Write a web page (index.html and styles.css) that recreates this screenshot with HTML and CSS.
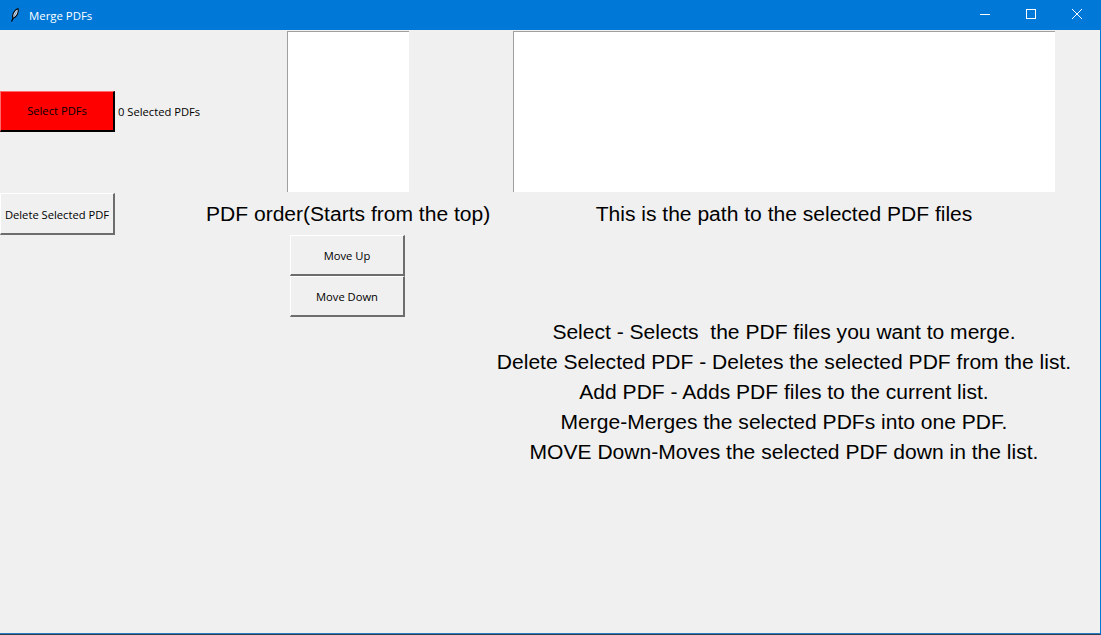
FILE: index.html
```html
<!DOCTYPE html>
<html lang="en">
<head>
<meta charset="UTF-8">
<meta name="viewport" content="width=device-width, initial-scale=1.0">
<title>Merge PDFs</title>
<link rel="stylesheet" href="styles.css">
</head>
<body>

<div class="window">
  <div class="titlebar">
    <svg class="feather" width="16" height="16" viewBox="0 0 16 16">
      <path d="M3.500 14.500 L5 11.500" stroke="#000" stroke-width="1.200" fill="none"/>
      <path d="M5 11.500 C3.800 8 5.500 3.500 10 1.500 C11 5 9.500 9.500 5 11.500 Z" fill="#cfe3f7" stroke="#000" stroke-width="1.100"/>
      <path d="M5.500 10 L8.500 4.500" stroke="#5a7fa5" stroke-width="0.800" fill="none"/>
    </svg>
    <span class="title">Merge PDFs</span>
    <div class="controls">
      <svg width="46" height="30" viewBox="0 0 46 30"><path d="M18 14.500 H28" stroke="#fff" fill="none"/></svg>
      <svg width="46" height="30" viewBox="0 0 46 30"><rect x="18.500" y="9.500" width="9" height="9" stroke="#fff" fill="none"/></svg>
      <svg width="46" height="30" viewBox="0 0 46 30"><path d="M18 9 L28 19 M28 9 L18 19" stroke="#fff" fill="none"/></svg>
    </div>
  </div>

  <div class="app">
    <div class="cell-select"><button class="btn btn-red">Select PDFs</button></div>
    <div class="cell-count">0 Selected PDFs</div>
    <div class="cell-order"><div class="listbox order-list"></div></div>
    <div class="cell-path"><div class="listbox path-list"></div></div>

    <button class="btn cell-delete">Delete Selected PDF</button>
    <div class="big cell-order-label">PDF order(Starts from the top)</div>
    <div class="big cell-path-label">This is the path to the selected PDF files</div>

    <button class="btn cell-up">Move Up</button>
    <button class="btn cell-down">Move Down</button>

    <div class="big help">
      <div>Select - Selects&nbsp; the PDF files you want to merge.</div>
      <div>Delete Selected PDF - Deletes the selected PDF from the list.</div>
      <div>Add PDF - Adds PDF files to the current list.</div>
      <div>Merge-Merges the selected PDFs into one PDF.</div>
      <div>MOVE Down-Moves the selected PDF down in the list.</div>
    </div>
  </div>
</div>

</body>
</html>
```

FILE: styles.css
```css
html, body {
  margin: 0;
  padding: 0;
  height: 100%;
  overflow: hidden;
}

.window {
  height: 635px;
  box-sizing: border-box;
  background-color: #f0f0f0;
  border-right: 1px solid #0078d7;
  border-bottom: 1px solid #2d3e50;
  display: flex;
  flex-direction: column;
}

.titlebar {
  height: 30px;
  flex: none;
  background-color: #0078d7;
  display: flex;
  align-items: center;
  padding-left: 8px;
}

.feather {
  flex: none;
}

.title {
  margin-left: 5px;
  color: #fff;
  font-family: "Open Sans", sans-serif;
  font-size: 11.4px;
}

.controls {
  margin-left: auto;
  display: flex;
}

.app {
  flex: 1;
  display: grid;
  grid-template-columns: 115px 91px 284px 588px;
  grid-template-rows: 163px 42px 41px 41px 1fr;
  border-bottom: 1px solid #2f7cc0;
  font-family: "Open Sans", sans-serif;
  font-size: 11.2px;
  color: #000;
}

.btn {
  display: block;
  width: 115px;
  padding: 1px 0 0;
  box-sizing: border-box;
  font-family: "Open Sans", sans-serif;
  font-size: 11.2px;
  color: #000;
  background-color: #f0f0f0;
  border: 2px solid;
  border-color: #fff #6d6d6d #6d6d6d #fff;
  border-left-width: 1px;
  border-top-width: 1px;
}

.btn-red {
  height: 41px;
  padding: 0 0 1px;
  background-color: #ff0000;
  border-color: #ff6a6a #000 #000 #ff6a6a;
}

.cell-select {
  grid-column: 1;
  grid-row: 1;
  align-self: center;
  margin-top: -1px;
}

.cell-count {
  grid-column: 2;
  grid-row: 1;
  align-self: center;
  white-space: nowrap;
  padding-left: 3px;
}

.cell-order,
.cell-path {
  grid-row: 1;
  padding-top: 1px;
  display: flex;
  justify-content: center;
  align-items: flex-start;
}

.cell-order {
  grid-column: 3;
}

.cell-path {
  grid-column: 4;
}

.listbox {
  box-sizing: border-box;
  background-color: #fff;
  border-top: 1px solid #a0a0a0;
  border-left: 1px solid #a0a0a0;
  height: 161px;
}

.order-list {
  width: 122px;
}

.path-list {
  width: 542px;
}

.cell-delete {
  grid-column: 1;
  grid-row: 2;
}

.big {
  font-family: "Liberation Sans", Arial, sans-serif;
  font-size: 21.05px;
  text-align: center;
  white-space: nowrap;
}

.cell-order-label {
  grid-column: 3;
  grid-row: 2;
  align-self: center;
}

.cell-path-label {
  grid-column: 4;
  grid-row: 2;
  align-self: center;
}

.cell-up,
.cell-down {
  grid-column: 3;
  justify-self: center;
  margin-left: -1px;
}

.cell-up {
  grid-row: 3;
}

.cell-down {
  grid-row: 4;
}

.help {
  grid-column: 4;
  grid-row: 5;
  line-height: 30px;
}
```
